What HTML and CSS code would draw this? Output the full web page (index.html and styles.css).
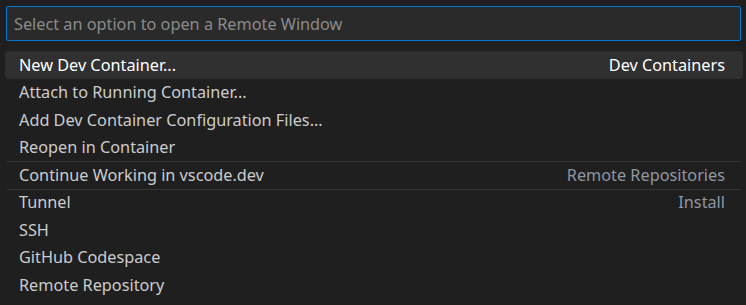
FILE: index.html
```html
<!DOCTYPE html>
<html>
<head>
<meta charset="utf-8">
<link rel="stylesheet" href="styles.css">
</head>
<body>
<div class="quick-input">
  <div class="input-box"><input class="input" type="text" placeholder="Select an option to open a Remote Window"></div>
  <div class="list">
    <div class="row selected"><span class="label">New Dev Container...</span><span class="desc">Dev Containers</span></div>
    <div class="row"><span class="label">Attach to Running Container...</span></div>
    <div class="row"><span class="label">Add Dev Container Configuration Files...</span></div>
    <div class="row"><span class="label">Reopen in Container</span></div>
    <div class="row sep"><span class="label">Continue Working in vscode.dev</span><span class="group">Remote Repositories</span></div>
    <div class="row sep"><span class="label">Tunnel</span><span class="group">Install</span></div>
    <div class="row"><span class="label">SSH</span></div>
    <div class="row"><span class="label">GitHub Codespace</span></div>
    <div class="row"><span class="label">Remote Repository</span></div>
  </div>
</div>
</body>
</html>
```
FILE: styles.css
```css
html, body {
  margin: 0;
  padding: 0;
  background: #1f1f1f;
  height: 100%;
  overflow: hidden;
}
.quick-input {
  font-family: "Noto Sans", "DejaVu Sans", sans-serif;
  font-size: 16.25px;
  color: #cccccc;
  padding: 6px 5px 0 6px;
}
.input-box {
  height: 35px;
  box-sizing: border-box;
  border: 1px solid #0078d4;
  border-radius: 2px;
  background: #2a2a2a;
  display: flex;
  align-items: center;
}
.input {
  flex: 1;
  background: transparent;
  border: none;
  outline: none;
  font: inherit;
  color: #cccccc;
  padding: 0 0 0 7px;
  height: 100%;
}
.input::placeholder {
  color: #8b8b8b;
}
.list {
  margin: 10px -2px 0 -1px;
}
.row {
  height: 27.5px;
  box-sizing: border-box;
  display: flex;
  align-items: center;
  justify-content: space-between;
  padding: 0 18px 0 14px;
  border-radius: 4px;
  white-space: nowrap;
  position: relative;
}
.row.selected {
  background: #303030;
  color: #ffffff;
}
.row.sep::before {
  content: "";
  position: absolute;
  top: 0;
  left: 2px;
  right: 2px;
  height: 1px;
  background: #353535;
}
.desc {
  color: #ffffff;
}
.group {
  color: #8f97a1;
}
```
